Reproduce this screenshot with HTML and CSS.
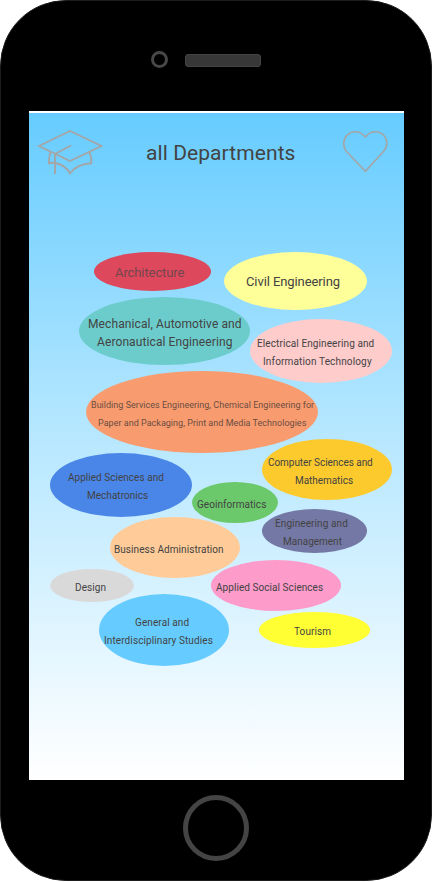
FILE: index.html
```html
<!DOCTYPE html>
<html lang="en">
<head>
<meta charset="utf-8">
<title>all Departments</title>
<link rel="stylesheet" href="styles.css">
</head>
<body>
<div class="phone">
  <div class="phone-top">
    <span class="camera"></span>
    <span class="speaker"></span>
  </div>
  <main class="screen">
    <header class="header">
      <svg class="cap" viewBox="0 0 66 48" fill="none" stroke="#a5a5a5" stroke-width="1.9">
        <path d="M2 17 33 2 64.500 17 33 32Z"/>
        <path d="M34 16.500 18 25V45"/>
        <path d="M13.500 23Q11.700 29 12 34.300Q15 33.500 18 34"/>
        <path d="M18 34Q28 35.500 33 44.300Q40 35 54.300 34.300Q54.800 28.500 52.500 23"/>
      </svg>
      <h1 class="title">all Departments</h1>
      <svg class="heart" viewBox="0 0 46 44" fill="none" stroke="#a5a5a5" stroke-width="1.6">
        <path d="M23.400 41.300 4.500 21.500C2 18.800 1.800 16 1.800 13.300A11.200 11.600 0 0 1 12.800 1.700C17 1.700 21 4 23.400 7C25.500 4 29 1.700 33.500 1.700A11.200 11.600 0 0 1 44.800 13.300C44.800 16 44.300 18.500 41.500 21.500Z"/>
      </svg>
    </header>
    <div class="cloud">
      <div class="bubble large architecture"><span>Architecture</span></div>
      <div class="bubble large civil"><span>Civil Engineering</span></div>
      <div class="bubble large mechanical"><span>Mechanical, Automotive and</span><span>Aeronautical Engineering</span></div>
      <div class="bubble electrical"><span>Electrical Engineering and</span><span>Information Technology</span></div>
      <div class="bubble small building"><span>Building Services Engineering, Chemical Engineering for</span><span>Paper and Packaging, Print and Media Technologies</span></div>
      <div class="bubble sciences"><span>Applied Sciences and</span><span>Mechatronics</span></div>
      <div class="bubble computer"><span>Computer Sciences and</span><span>Mathematics</span></div>
      <div class="bubble geo"><span>Geoinformatics</span></div>
      <div class="bubble management"><span>Engineering and</span><span>Management</span></div>
      <div class="bubble business"><span>Business Administration</span></div>
      <div class="bubble design"><span>Design</span></div>
      <div class="bubble social"><span>Applied Social Sciences</span></div>
      <div class="bubble general"><span>General and</span><span>Interdisciplinary Studies</span></div>
      <div class="bubble tourism"><span>Tourism</span></div>
    </div>
  </main>
  <div class="phone-bottom"><span class="home"></span></div>
</div>
</body>
</html>
```
FILE: styles.css
```css
* { box-sizing: border-box; }
body { margin: 0; background: #fff; font-family: Roboto, "Liberation Sans", sans-serif; color: #434343; }
.phone { width: 432px; height: 881px; background: #000; border: 1px solid #1c1c1c; border-radius: 66px; padding: 0 27px 0 28px; overflow: hidden; }
.phone-top { height: 110px; padding: 50px 0 0 122px; display: flex; align-items: flex-start; gap: 17px; }
.camera { width: 17px; height: 17px; border: 3px solid #484848; border-radius: 50%; }
.speaker { width: 76px; height: 13px; margin-top: 3px; background: #373737; border: 1px solid #444; border-radius: 3px; }
.screen { width: 375px; height: 669px; border-top: 2px solid #fff; background: linear-gradient(#6cf, #b3e6ff 46%, #fff); }
.header { height: 80px; padding: 16px 16px 0 8px; display: flex; align-items: flex-start; }
.cap { width: 66px; height: 48px; flex: none; }
.title { flex: 1; margin: 10px 0 0 43px; font-size: 21px; line-height: 28px; font-weight: 400; white-space: nowrap; letter-spacing: .08px; }
.heart { width: 46px; height: 44px; flex: none; margin: 1px 0 0; }

/* Free canvas of department bubbles */
.cloud { position: relative; height: 587px; margin-top: -80px; }
.bubble { position: absolute; border-radius: 50%; font-size: 10px; line-height: 18px; white-space: nowrap; letter-spacing: .1px; }
.bubble span { display: block; }
.large { font-size: 13px; letter-spacing: -.09px; }
.small { font-size: 9px; letter-spacing: .02px; }
.architecture { left: 65px; top: 139px; width: 117px; height: 39px; padding: 12px 0 0 21px; background: #dd485c; color: #72464c; }
.civil { left: 195px; top: 139px; width: 143px; height: 58px; padding: 21px 0 0 22px; background: #ff9; }
.mechanical { left: 50px; top: 184px; width: 171px; height: 68px; padding: 18px 0 0 9px; background: #6ccccb; font-size: 12px; letter-spacing: .1px; }
.mechanical span + span { margin-left: 9px; }
.electrical { left: 221px; top: 206px; width: 142px; height: 64px; padding: 16px 0 0 7px; background: #fcc; }
.electrical span + span { margin-left: 6px; letter-spacing: .15px; }
.building { left: 57px; top: 258px; width: 232px; height: 82px; padding: 25px 0 0 5px; background: #f89c70; color: #6b4d3f; }
.building span + span { margin-left: 7px; }
.sciences { left: 21px; top: 340px; width: 142px; height: 64px; padding: 16px 0 0 18px; background: #4a86e8; letter-spacing: .03px; }
.sciences span + span { margin-left: 19px; }
.computer { left: 233px; top: 326px; width: 130px; height: 61px; padding: 15px 0 0 6px; background: #fdca2d; letter-spacing: -.05px; }
.computer span + span { margin-left: 27px; }
.geo { left: 163px; top: 369px; width: 86px; height: 41px; padding: 14px 0 0 5px; background: #6bc96b; letter-spacing: .05px; }
.management { left: 233px; top: 396px; width: 105px; height: 44px; padding: 6px 0 0 13px; background: #7478a5; }
.management span + span { margin-left: 8px; letter-spacing: 0; }
.business { left: 81px; top: 404px; width: 130px; height: 61px; padding: 24px 0 0 4px; background: #fc9; letter-spacing: .06px; }
.design { left: 21px; top: 456px; width: 84px; height: 33px; padding: 10px 0 0 25px; background: #d9d9d9; }
.social { left: 182px; top: 447px; width: 130px; height: 51px; padding: 19px 0 0 5px; background: #fd9bca; letter-spacing: .06px; }
.general { left: 70px; top: 481px; width: 130px; height: 72px; padding: 20px 0 0 36px; background: #6cf; }
.general span + span { margin-left: -31px; }
.tourism { left: 230px; top: 499px; width: 111px; height: 36px; padding: 11px 0 0 35px; background: #ff3; }

.phone-bottom { height: 100px; display: flex; justify-content: center; padding: 15px 1px 0 0; }
.home { width: 66px; height: 66px; border: 5px solid #444; border-radius: 50%; }
```
